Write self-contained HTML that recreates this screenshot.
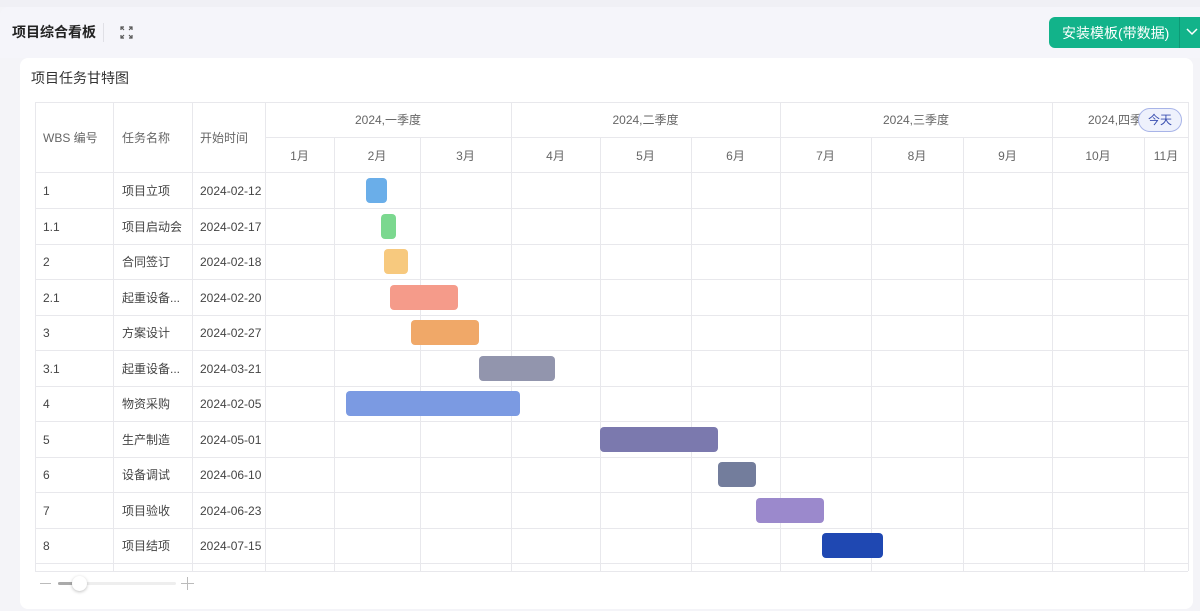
<!DOCTYPE html>
<html><head><meta charset="utf-8"><style>
*{margin:0;padding:0;box-sizing:border-box}
body{width:1200px;height:611px;overflow:hidden;background:#f4f4f8;font-family:"Liberation Sans","Noto Sans CJK SC",sans-serif;position:relative;color:#333}
.top{position:absolute;left:0;top:0;width:1200px;height:7px;background:#f0f0f5}
.hdr{position:absolute;left:0;top:7px;width:1200px;height:51px;background:#f5f5fa;border-top-left-radius:8px}
.title{position:absolute;left:12px;top:22px;font-size:14px;line-height:20px;font-weight:bold;color:#222}
.sep{position:absolute;left:103px;top:23px;width:1px;height:19px;background:#e0e0e6}
.btn{position:absolute;left:1049px;top:17px;width:151px;height:31px;background:#12b38a;border-radius:6px 0 0 6px;color:#fff;font-size:14px}
.btn span{position:absolute;left:13px;top:6px;line-height:20px}
.btn i{position:absolute;left:130px;top:0;width:1px;height:31px;background:#0d9a76}
.card{position:absolute;left:20px;top:58px;width:1173px;height:551px;background:#fff;border-radius:8px}
.ct{position:absolute;left:31px;top:68px;font-size:14px;line-height:20px;color:#333}
.l{position:absolute;background:#e8e8ec}
.t{position:absolute;font-size:12px;line-height:16px;color:#444;white-space:nowrap}
.h{color:#666}
.bar{position:absolute;height:25px;border-radius:4px}
</style></head><body>
<div class="top"></div>
<div class="hdr"></div>
<div class="title">项目综合看板</div>
<div class="sep"></div>
<svg style="position:absolute;left:120px;top:26px" width="13" height="13" viewBox="0 0 13 13" fill="none" stroke="#555" stroke-width="1.2"><path d="M1 4V1h3M1 1l3 3M9 1h3v3M12 1L9 4M1 9v3h3M1 12l3-3M12 9v3H9M12 12L9 9"/></svg>
<div class="btn"><span>安装模板(带数据)</span><i></i><svg style="position:absolute;left:137px;top:11px" width="12" height="8" viewBox="0 0 12 8" fill="none" stroke="#fff" stroke-width="1.5"><path d="M1 1l5 5 5-5"/></svg></div>
<div class="card"></div>
<div class="ct">项目任务甘特图</div>
<div id="g"></div>
<div style="position:absolute;left:40px;top:583px;width:11px;height:1px;background:#bbb"></div>
<div style="position:absolute;left:58px;top:582px;width:118px;height:3px;background:#eee;border-radius:2px"></div>
<div style="position:absolute;left:58px;top:582px;width:16px;height:3px;background:#aaa;border-radius:2px"></div>
<div style="position:absolute;left:72px;top:576px;width:15px;height:15px;background:#fff;border-radius:50%;box-shadow:0 1px 3px rgba(0,0,0,.25)"></div>
<div style="position:absolute;left:181px;top:583px;width:13px;height:1px;background:#bbb"></div>
<div style="position:absolute;left:187px;top:577px;width:1px;height:13px;background:#bbb"></div>
<script>
(function(){
var g=document.getElementById('g'),h='';
function L(x,y,w,hh){h+='<div class="l" style="left:'+x+'px;top:'+y+'px;width:'+w+'px;height:'+hh+'px"></div>'}
function T(x,y,s,c,extra){h+='<div class="t '+(c||'')+'" style="left:'+x+'px;top:'+y+'px;'+(extra||'')+'">'+s+'</div>'}
var tp=102,bt=571;
L(35,tp,1153,1);L(35,bt,1153,1);L(265,137,923,1);L(35,172,1153,1);
[35,113,192,265,1188].forEach(function(x){L(x,tp,1,bt-tp)});
var q=[511,780,1052];
var m=[265,334,420,511,600,691,780,871,963,1052,1144,1188];
m.forEach(function(x,i){if(i>0&&i<m.length-1){var isq=q.indexOf(x)>=0;L(x,isq?tp:137,1,isq?bt-tp:bt-137)}});
for(var i=0;i<11;i++){var c=(m[i]+m[i+1])/2;T(c-20,148,(i+1)+'月','h','width:40px;text-align:center')}
T(265,112,'2024,一季度','h','width:246px;text-align:center');T(511,112,'2024,二季度','h','width:269px;text-align:center');T(780,112,'2024,三季度','h','width:272px;text-align:center');T(1088,112,'2024,四季度','h');
h+='<div style="position:absolute;left:1138px;top:108px;width:44px;height:24px;border:1px solid #a8b4e8;background:#eef1fc;border-radius:12px;color:#3a4fb0;font-size:12px;text-align:center;line-height:22px">今天</div>';
T(43,130,'WBS 编号','h');T(122,130,'任务名称','h');T(200,130,'开始时间','h');
var rows=[['1','项目立项','2024-02-12',366,387,'#6aaee9'],['1.1','项目启动会','2024-02-17',381,396,'#7bd88f'],['2','合同签订','2024-02-18',384,408,'#f7c97e'],['2.1','起重设备...','2024-02-20',390,458,'#f59b8a'],['3','方案设计','2024-02-27',411,479,'#f0a868'],['3.1','起重设备...','2024-03-21',479,555,'#9295ad'],['4','物资采购','2024-02-05',346,520,'#7b9ae2'],['5','生产制造','2024-05-01',600,718,'#7b79ae'],['6','设备调试','2024-06-10',718,756,'#737d9c'],['7','项目验收','2024-06-23',756,824,'#9b89cc'],['8','项目结项','2024-07-15',822,883,'#1f48b2']];
rows.forEach(function(r,i){var y=173+i*35.5;L(35,Math.round(y+35),1153,1);T(43,y+10,r[0]);T(122,y+10,r[1]);T(200,y+10,r[2]);
h+='<div class="bar" style="left:'+r[3]+'px;top:'+(y+5)+'px;width:'+(r[4]-r[3])+'px;background:'+r[5]+'"></div>'});
g.innerHTML=h;
})();
</script>
</body></html>
